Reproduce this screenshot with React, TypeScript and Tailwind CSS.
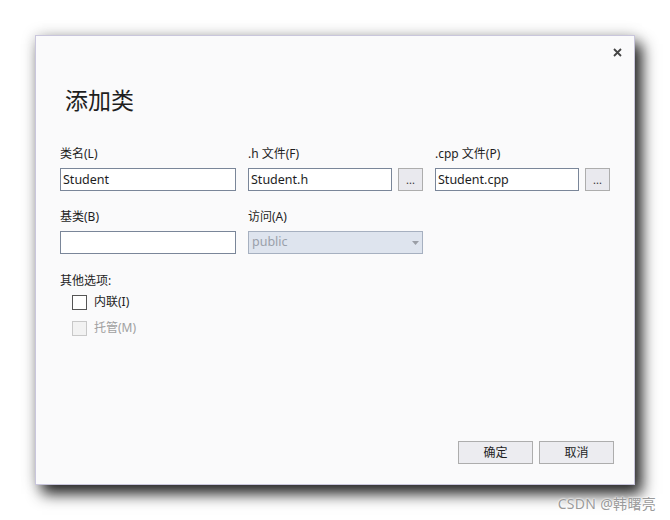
import React from 'react';

const font = { fontFamily: '"Noto Sans", "Noto Sans CJK SC", sans-serif' };

const Field: React.FC<{ label: string; value?: string; browse?: boolean }> = ({ label, value = '', browse }) => (
  <div className="flex flex-col">
    <div className="h-4 text-[12px] leading-4 text-[#1e1e1e]">{label}</div>
    <div className="mt-[6px] flex gap-[6px]">
      <div className="h-[23px] flex-1 border border-[#7a8699] bg-white px-[2px] text-[12.5px] leading-[21px] text-[#1e1e1e]">
        {value}
      </div>
      {browse && (
        <div className="flex h-[23px] w-[25px] items-center justify-center border border-[#adadad] bg-[#e9e9ee] text-[11px] leading-none text-[#333]">
          ...
        </div>
      )}
    </div>
  </div>
);

export default function App() {
  return (
    <div className="relative h-[520px] w-[670px] bg-white pl-[35px] pt-[35px]" style={font}>
      <div className="relative flex h-[450px] w-[600px] flex-col border border-[#c9c6dc] bg-[#fafafb] shadow-[7px_9px_14px_rgba(0,0,0,0.85),0_0_14px_rgba(0,0,0,0.18)]">
        <svg className="absolute right-[12px] top-[12px]" width="9" height="9" viewBox="0 0 9 9">
          <path d="M1 1l7 7M8 1L1 8" stroke="#444" strokeWidth="1.8" />
        </svg>

        <div className="ml-[29px] mt-[48px] text-[23px] leading-8 text-[#1e1e1e]">添加类</div>

        <div className="ml-[24px] mt-[30px] grid grid-cols-[176px_175px_175px] gap-x-3">
          <Field label="类名(L)" value="Student" />
          <Field label=".h 文件(F)" value="Student.h" browse />
          <Field label=".cpp 文件(P)" value="Student.cpp" browse />
        </div>

        <div className="ml-[24px] mt-[18px] grid grid-cols-[176px_175px] gap-x-3">
          <Field label="基类(B)" />
          <div className="flex flex-col">
            <div className="h-4 text-[12px] leading-4 text-[#1e1e1e]">访问(A)</div>
            <div className="mt-[6px] flex h-[23px] items-center border border-[#a6b0c0] bg-[#dee4ee] pl-[3px] text-[12.5px] text-[#9aa0aa]">
              <span className="flex-1">public</span>
              <span className="flex w-[13px] items-center justify-center">
                <svg width="7" height="4" viewBox="0 0 7 4">
                  <path d="M0 0h7L3.5 4z" fill="#9a9ea6" />
                </svg>
              </span>
            </div>
          </div>
        </div>

        <div className="ml-[24px] mt-[19px] text-[12px] leading-4 text-[#1e1e1e]">其他选项:</div>
        <div className="ml-[36px] mt-[5px] flex flex-col gap-[10px]">
          <div className="flex items-center gap-[7px] text-[12px] leading-4 text-[#1e1e1e]">
            <div className="h-[15px] w-[15px] border border-[#555] bg-white" />
            内联(I)
          </div>
          <div className="flex items-center gap-[7px] text-[12px] leading-4 text-[#a0a0a0]">
            <div className="h-[15px] w-[15px] border border-[#c8c8c8] bg-[#f2f2f2]" />
            托管(M)
          </div>
        </div>

        <div className="mt-auto mb-[20px] mr-[20px] flex justify-end gap-[6px]">
          <div className="flex h-[23px] w-[75px] items-center justify-center border border-[#adadad] bg-[#ececf0] text-[12px] text-[#1e1e1e]">
            确定
          </div>
          <div className="flex h-[23px] w-[75px] items-center justify-center border border-[#adadad] bg-[#ececf0] text-[12px] text-[#1e1e1e]">
            取消
          </div>
        </div>
      </div>

      <div className="absolute bottom-[8px] right-[14px] text-[14px] leading-4 tracking-[0.3px] text-[#9a9a9a] [text-shadow:0_0_2px_#fff,0_0_2px_#fff]">
        CSDN @韩曙亮
      </div>
    </div>
  );
}
